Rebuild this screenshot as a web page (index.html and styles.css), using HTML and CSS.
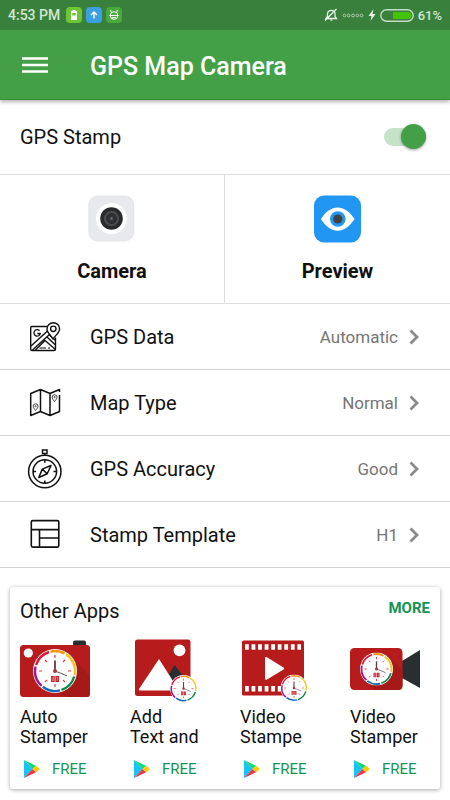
FILE: index.html
```html
<!DOCTYPE html>
<html lang="en">
<head>
<meta charset="utf-8">
<meta name="viewport" content="width=device-width, initial-scale=1">
<title>GPS Map Camera</title>
<link rel="stylesheet" href="styles.css">
</head>
<body>
<svg class="defs" aria-hidden="true">
  <symbol id="clock" viewBox="0 0 44 44">
    <circle cx="22" cy="22" r="22" fill="#fff"/>
    <g fill="none" stroke-width="2.4">
      <path d="M17.5 2.6A20 20 0 0 1 31.5 4.4" stroke="#f39200"/>
      <path d="M33 5.3A20 20 0 0 1 41.6 26" stroke="#fbc514"/>
      <path d="M41.2 27.5A20 20 0 0 1 28.5 40.9" stroke="#0b8a4b"/>
      <path d="M27 41.4A20 20 0 0 1 9.8 37.8" stroke="#1769b5"/>
      <path d="M8.6 36.8A20 20 0 0 1 2.6 17.5" stroke="#a7148c"/>
      <path d="M3.1 16A20 20 0 0 1 16 3" stroke="#e5153d"/>
    </g>
    <path d="M22 6v3M22 35v3M6 22h3M35 22h3M12 11l2 2M30 31l2 2M32 11l-2 2M14 31l-2 2" stroke="#e8393d" stroke-width="1.2"/>
    <path d="M22 11.500v10.500" stroke="#6d3a3a" stroke-width="1.800"/>
    <path d="M22 22l12 4.800" stroke="#555" stroke-width="1"/>
    <circle cx="22" cy="22" r="2" fill="#a13b3b"/>
    <path d="M18 27h3.700v6H18zM22.400 27h3.700v6h-3.700z" fill="#c4252b"/>
    <path d="M19.200 28.200h1.300v3.600h-1.300zM23.500 28.500h1.500l-1 3.500" fill="none" stroke="#f3b8b8" stroke-width=".5"/>
  </symbol>
  <symbol id="play" viewBox="0 0 18 20">
    <path d="M1 1v18l8.500-9z" fill="#14c5f6"/>
    <path d="M1 1l8.500 9L13 6.800z" fill="#18d676"/>
    <path d="M1 19l8.500-9L13 13.200z" fill="#ee3449"/>
    <path d="M13 6.800L17 10l-4 3.200L9.500 10z" fill="#fcc80a"/>
  </symbol>
  <symbol id="chevron" viewBox="0 0 10 16">
    <path d="M1.500 1.500L8 8l-6.500 6.500" fill="none" stroke="#8a8a8a" stroke-width="2.800"/>
  </symbol>
</svg>

<header class="top">
  <div class="status">
    <div class="status-side">
      <span class="time">4:53 PM</span>
      <svg class="chip" viewBox="0 0 16 16"><rect width="16" height="16" rx="4" fill="#6cc636"/><path d="M6.500 3h3v1H11v9H5V4h1.500z" fill="#fff"/><path d="M6.200 6h3.600v2.500H6.200z" fill="#6cc636"/></svg>
      <svg class="chip" viewBox="0 0 16 16"><rect width="16" height="16" rx="4" fill="#3b9fe0"/><path d="M8 11.500V5M5 8l3-3 3 3" fill="none" stroke="#fff" stroke-width="1.400"/></svg>
      <svg class="chip" viewBox="0 0 16 16"><rect width="16" height="16" rx="4" fill="#48aa3d"/><g fill="none" stroke="#fff"><circle cx="8" cy="8.500" r="3.800"/><path d="M5.500 5.500L4.500 3M10.500 5.500l1-2.500M3.500 8.500h9M6 10.500h4"/></g></svg>
    </div>
    <div class="status-side">
      <svg class="bell" viewBox="0 0 14 14"><path d="M2 10.500h10.500L11 8.500V5.500a3.800 3.800 0 0 0-7.500 0v3zM1 12.500L12.500 1" fill="none" stroke="#e9f3ea" stroke-width="1.300"/><path d="M5.500 11.500h3.500q-1.700 2.600-3.500 0z" fill="#e9f3ea"/></svg>
      <svg class="dots" viewBox="0 0 22 5"><g fill="none" stroke="#b5d0b7" stroke-width=".9"><circle cx="2.500" cy="2.500" r="1.400"/><circle cx="6.700" cy="2.500" r="1.400"/><circle cx="11" cy="2.500" r="1.400"/><circle cx="15.300" cy="2.500" r="1.400"/><circle cx="19.500" cy="2.500" r="1.400"/></g></svg>
      <svg class="bolt" viewBox="0 0 8 12"><path d="M5.500 0L0.500 7h3L2.500 12 7.500 5h-3z" fill="#e9f3ea"/></svg>
      <svg class="battery" viewBox="0 0 34 13"><rect x=".8" y=".8" width="32.400" height="11.400" rx="5.700" fill="none" stroke="#c4dcc5" stroke-width="1.400"/><path d="M13 3h15a3.500 3.500 0 0 1 0 7H13z" fill="#44c400"/></svg>
      <span class="percent">61%</span>
    </div>
  </div>
  <div class="appbar">
    <button class="menu" aria-label="Menu"><svg viewBox="0 0 26 16"><path d="M0 1.500h26M0 8h26M0 14.500h26" stroke="#fff" stroke-width="2.400"/></svg></button>
    <h1 class="title">GPS Map Camera</h1>
  </div>
</header>

<main>
  <label class="stamp" for="gps-stamp"><span>GPS Stamp</span><input class="switch" type="checkbox" role="switch" id="gps-stamp" checked></label>

  <div class="tiles">
    <button class="tile">
      <svg class="tile-icon" viewBox="0 0 48 48"><rect x=".8" y="1" width="45" height="45" rx="9" fill="#e8e9ed" stroke="#dedfe2" stroke-width=".8"/><circle cx="23.500" cy="23.500" r="15.500" fill="#fff"/><circle cx="23.500" cy="23.500" r="11.300" fill="#292a2c"/><circle cx="23.500" cy="23.500" r="6.500" fill="none" stroke="#4b4c4f" stroke-width="2.200"/><circle cx="23.500" cy="23.500" r="4" fill="#303134"/><circle cx="23.500" cy="23.500" r="1.200" fill="#747578"/></svg>
      <span>Camera</span>
    </button>
    <button class="tile">
      <svg class="tile-icon" viewBox="0 0 48 48"><rect y=".5" width="47" height="47" rx="10" fill="#2196f3"/><path d="M7 24C16 8.500 31 8.500 40.500 24C31 39.500 16 39.500 7 24z" fill="#fff"/><circle cx="23.800" cy="24" r="7.800" fill="#2196f3"/><circle cx="23.800" cy="24" r="4.600" fill="#424242"/></svg>
      <span>Preview</span>
    </button>
  </div>

  <button class="row">
    <svg class="row-icon" viewBox="0 -1.500 36 40"><g fill="none" stroke="#111" stroke-width="1.400" stroke-linejoin="round"><path d="M20.500 8H5Q3.700 8 3.700 9.500v21Q3.700 32 5 32h22q1.500 0 1.500-1.500V19"/><path d="M4 27.500L20.500 12.500M5.500 31.500L23 15.500M8.500 31.500l9.500-9.500L28.500 31M20 18.500l8.500 8M22.500 16.500l6 5.500"/><path d="M12.500 29.500h6.500M21 29.500h2" stroke-width="1"/><path d="M26 20.500C24 17 20 14.500 20 10.500a6.300 6.300 0 0 1 12.600 0c0 4-4.600 6.500-6.600 10z" fill="#fff"/><circle cx="26.300" cy="10.300" r="2.700"/><path d="M12.500 12.200a3.200 3.200 0 1 0 .8 2.800h-3" stroke-width="1.300"/></g></svg>
    <span class="name">GPS Data</span><span class="value">Automatic</span><svg class="chevron"><use href="#chevron"/></svg>
  </button>
  <button class="row">
    <svg class="row-icon" viewBox="0 0 36 40"><g fill="none" stroke="#111" stroke-width="1.500" stroke-linejoin="round"><path d="M13.500 6.500L3.700 10.500v22l9.800-4 9.500 4 9.500-4V12M32.500 9V6.500l-9.500 4-9.500-4M13.500 6.500v22M23 10.500v22"/><g stroke="#444" stroke-width="1"><path d="M8.500 27.500C7 25.500 6.200 24.700 6.200 23.200a2.400 2.400 0 0 1 4.800 0C11 24.700 10 25.500 8.500 27.500zM27.500 18.500c-1.500-2-2.300-2.800-2.300-4.300a2.400 2.400 0 0 1 4.800 0C30 15.700 29 16.500 27.500 18.500z"/><circle cx="8.600" cy="23.200" r=".6"/><circle cx="27.600" cy="14.200" r=".6"/></g></g></svg>
    <span class="name">Map Type</span><span class="value">Normal</span><svg class="chevron"><use href="#chevron"/></svg>
  </button>
  <button class="row">
    <svg class="row-icon" viewBox="0 0 36 40"><g fill="none" stroke="#111" stroke-width="1.500"><circle cx="17.800" cy="22.500" r="16.200"/><circle cx="17.800" cy="22.500" r="11.800"/><path d="M15.500 1h4.500v3.500h-4.500zM17.800 4.500v2M17.800 10.700v3M17.800 31.500v3M6 22.500h3M26.500 22.500h3"/><path d="M24 16.500l-8.700 3.600L11.800 28.500l8.400-3.700zM15.300 20.100l4.900 4.700" stroke-linejoin="round"/></g></svg>
    <span class="name">GPS Accuracy</span><span class="value">Good</span><svg class="chevron"><use href="#chevron"/></svg>
  </button>
  <button class="row">
    <svg class="row-icon" viewBox="0 0 36 40"><g fill="none" stroke="#111" stroke-width="1.600"><rect x="4.300" y="5.600" width="27.500" height="26.500" rx="1.500"/><path d="M4.300 14.600H31.800M12.500 14.600V32M12.500 23H31.800"/></g></svg>
    <span class="name">Stamp Template</span><span class="value">H1</span><svg class="chevron"><use href="#chevron"/></svg>
  </button>

  <section class="card">
    <div class="card-head"><h2>Other Apps</h2><a class="more" href="#more">MORE</a></div>
    <div class="apps">
      <article class="app">
        <svg class="app-icon" viewBox="0 0 70 64"><path d="M53 6V3.500q0-2 2-2h9q2 0 2 2V6z" fill="#292f31"/><rect y="6" width="70" height="52" rx="3.500" fill="#b71c1c"/><path d="M50 17l20 20v17.500q0 3.500-3.500 3.500H48L23 48z" fill="#a51919"/><circle cx="8.300" cy="14" r="4.600" fill="#fff"/><use href="#clock" x="13" y="10" width="44" height="44"/></svg>
        <h3>Auto Stamper</h3>
        <a class="free" href="#auto"><svg><use href="#play"/></svg>FREE</a>
      </article>
      <article class="app">
        <svg class="app-icon" viewBox="0 0 70 64"><rect x="5" y=".5" width="55.500" height="56.500" rx="2.500" fill="#b71c1c"/><circle cx="49.500" cy="11.300" r="5.900" fill="#fff"/><path d="M44.500 26l8 10-8 10-6-10z" fill="#292f31"/><path d="M29 20L9 50q-.8 1.500 1 1.500h39z" fill="#fff"/><use href="#clock" x="40" y="36" width="27" height="27"/></svg>
        <h3>Add <br>Text and</h3>
        <a class="free" href="#add"><svg><use href="#play"/></svg>FREE</a>
      </article>
      <article class="app">
        <svg class="app-icon" viewBox="0 0 70 64"><rect x="2" y="1.500" width="62" height="55" rx="1.500" fill="#b71c1c"/><path d="M5 8h56M5 49.700h38" stroke="#fff" stroke-width="5.500" stroke-dasharray="3.800 2.750"/><path d="M25 19q0-1.500 1.500-1l17 10.500q1.500 1 0 2L27 40.500q-2 1-2-1z" fill="#fff"/><use href="#clock" x="40.500" y="35.500" width="27" height="27"/></svg>
        <h3>Video Stampe</h3>
        <a class="free" href="#video"><svg><use href="#play"/></svg>FREE</a>
      </article>
      <article class="app">
        <svg class="app-icon" viewBox="0 0 70 64"><path d="M52 22l18-11v38L52 39z" fill="#292f31"/><rect y="9" width="52.500" height="42" rx="4.500" fill="#b71c1c"/><path d="M38 17l14.500 14v15.500q0 4.500-4.500 4.500H24L17 43z" fill="#a51919"/><use href="#clock" x="10" y="13.500" width="33" height="33"/></svg>
        <h3>Video Stamper</h3>
        <a class="free" href="#stamper"><svg><use href="#play"/></svg>FREE</a>
      </article>
    </div>
  </section>
</main>
</body>
</html>
```
FILE: styles.css
```css
* { box-sizing: border-box; }

body {
  margin: 0;
  background: #fff;
  color: #111;
  font-family: Roboto, "Liberation Sans", sans-serif;
  font-size: 20px;
}

.defs { display: none; }
svg { display: block; flex: none; }
h1, h2, h3 { margin: 0; font-weight: 400; }
a { text-decoration: none; }

button {
  margin: 0;
  padding: 0;
  border: 0;
  background: none;
  color: inherit;
  font: inherit;
  cursor: pointer;
}

.top {
  background: #43a047;
  border-bottom: 1px solid #2f9134;
  box-shadow: 0 2px 4px rgba(0, 0, 0, .3);
}

.status {
  display: flex;
  justify-content: space-between;
  align-items: center;
  height: 30px;
  padding: 0 8px;
  background: #38803b;
  color: #d3e6d4;
  font-size: 14px;
  font-weight: 500;
}

.status-side { display: flex; align-items: center; gap: 4px; }
.time { margin-right: 2px; }
.percent { font-size: 13px; }
.chip { width: 16px; height: 16px; }
.bell { width: 14px; height: 14px; }
.dots { width: 22px; height: 5px; }
.bolt { width: 8px; height: 12px; }
.battery { width: 34px; height: 13px; }

.appbar {
  display: flex;
  align-items: center;
  gap: 42px;
  height: 69px;
  padding: 0 22px;
}

.menu svg { width: 26px; height: 16px; }
.title { padding-top: 4px; color: #fff; font-size: 25px; font-weight: 500; }

.stamp {
  display: flex;
  justify-content: space-between;
  align-items: center;
  height: 75px;
  padding: 0 24px 0 20px;
  border-bottom: 1px solid #dedede;
}

.switch {
  appearance: none;
  position: relative;
  width: 42px;
  height: 18px;
  margin: 0;
  border-radius: 9px;
  background: #c5e3c7;
}

.switch::after {
  content: "";
  position: absolute;
  top: -4px;
  right: 0;
  width: 25px;
  height: 25px;
  border-radius: 50%;
  background: #43a047;
  box-shadow: 0 1px 3px rgba(0, 0, 0, .4);
}

.tiles {
  display: grid;
  grid-template-columns: 1fr 1fr;
  border-bottom: 1px solid #dedede;
}

.tile {
  display: flex;
  flex-direction: column;
  align-items: center;
  gap: 16px;
  padding: 20px 0;
  font-weight: 700;
  line-height: 24px;
}

.tile:first-child { border-right: 1px solid #dedede; }
.tile-icon { width: 48px; height: 48px; }

.row {
  display: flex;
  align-items: center;
  width: 100%;
  height: 66px;
  padding: 0 31px 0 27px;
  border-bottom: 1px solid #d2d2d2;
  text-align: left;
}

.row-icon { width: 36px; height: 40px; margin-right: 27px; }
.name { flex: 1; }
.value { margin-right: 11px; color: #757575; font-size: 17px; }
.chevron { width: 10px; height: 16px; }

.card {
  margin: 19px 10px 11px;
  padding: 10px;
  border-radius: 3px;
  background: #fff;
  box-shadow: 0 1px 4px rgba(0, 0, 0, .35);
}

.card-head {
  display: flex;
  justify-content: space-between;
  align-items: flex-start;
  height: 42px;
}

h2 { font-size: 20px; line-height: 28px; }
.more { color: #149455; font-size: 15px; font-weight: 700; line-height: 22px; }

.apps {
  display: grid;
  grid-template-columns: repeat(4, 1fr);
  gap: 30px;
}

.app-icon { width: 70px; height: 64px; }
h3 { margin-top: 4px; font-size: 18px; line-height: 20px; }

.free {
  display: flex;
  align-items: center;
  gap: 11px;
  margin-top: 12px;
  padding-left: 3px;
  color: #149455;
  font-size: 15px;
  line-height: 20px;
}

.free svg { width: 18px; height: 20px; }
```
